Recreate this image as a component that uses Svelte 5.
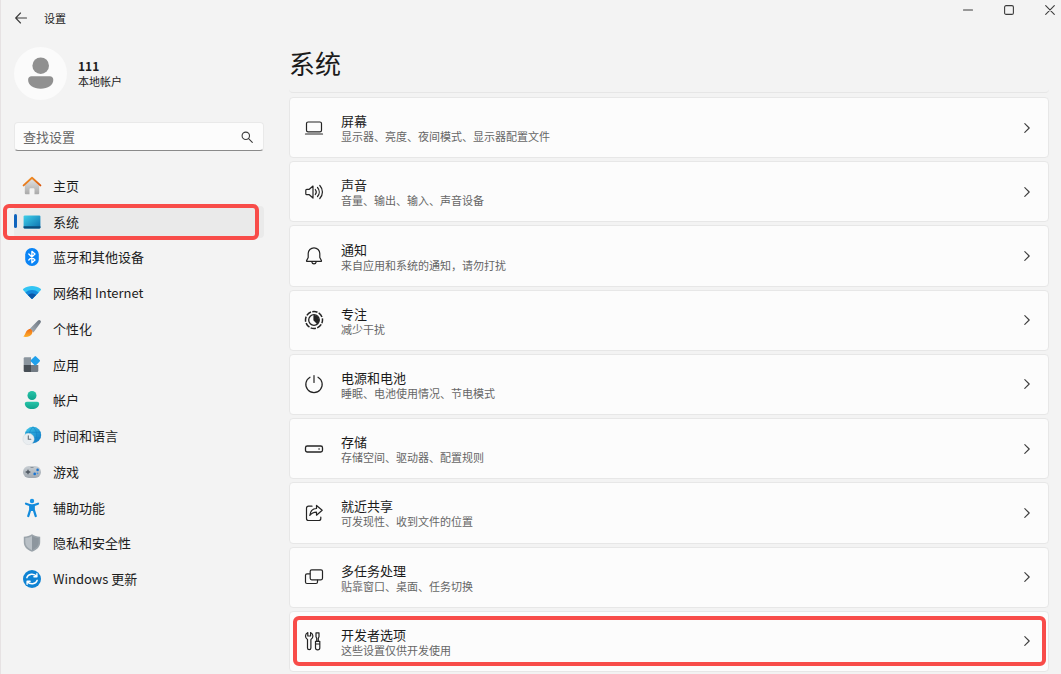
<script>
  const line = (body) =>
    `<svg width="20" height="20" viewBox="0 0 20 20" fill="none" stroke="#242424" stroke-width="1.2" stroke-linecap="round" stroke-linejoin="round" aria-hidden="true">${body}</svg>`;
  const color = (body) =>
    `<svg width="20" height="20" viewBox="0 0 20 20" fill="none" aria-hidden="true">${body}</svg>`;

  const nav = [
    {
      label: '主页',
      icon: color(`<defs><linearGradient id="hw" x1="0" y1="0" x2="0" y2="1"><stop stop-color="#e4e4e4"/><stop offset="1" stop-color="#a9a9a9"/></linearGradient><linearGradient id="hr" x1="0" y1="0" x2="1" y2="1"><stop stop-color="#f59a2c"/><stop offset="1" stop-color="#d9560b"/></linearGradient></defs>
        <path d="M2.8 9 10 2.4 17.2 9v8.3a1 1 0 0 1-1 1h-3.7v-5.1a1 1 0 0 0-1-1h-3a1 1 0 0 0-1 1v5.1H3.8a1 1 0 0 1-1-1z" fill="url(#hw)"/>
        <path d="M1.6 9.4 10 1.8l8.4 7.6" stroke="url(#hr)" stroke-width="1.9" stroke-linecap="round" stroke-linejoin="round"/>`)
    },
    {
      label: '系统',
      active: true,
      icon: color(`<defs><linearGradient id="sy" x1="0" y1="0" x2="1" y2="1"><stop stop-color="#3fd0ea"/><stop offset="1" stop-color="#0c6fae"/></linearGradient></defs>
        <rect x="1.6" y="3.4" width="16.8" height="13" rx="1.2" fill="url(#sy)"/><path d="M1.6 14.2h16.8v1a1.2 1.2 0 0 1-1.2 1.2H2.8a1.2 1.2 0 0 1-1.2-1.2z" fill="#0b4c7c"/>`)
    },
    {
      label: '蓝牙和其他设备',
      icon: color(`<rect x="3.2" y="1" width="13.6" height="18" rx="6.6" fill="#0a84f5"/><path d="m6.8 7 6.2 6-3.1 2.7V4.3L13 7l-6.2 6" stroke="#fff" stroke-width="1.3" stroke-linejoin="round" stroke-linecap="round"/>`)
    },
    {
      label: '网络和 Internet',
      icon: color(`<path d="M1.3 7.3a1 1 0 0 1 .1-1.5c5-3.8 12.2-3.8 17.2 0a1 1 0 0 1 .1 1.5L10.7 15.6a1 1 0 0 1-1.4 0z" fill="#32c4f3"/>
        <path d="M3.3 9.4c3.9-3.3 9.5-3.3 13.4 0l-6 6.2a1 1 0 0 1-1.4 0z" fill="#1489db"/><path d="M5.900 12.100c2.500-2 5.700-2 8.200 0l-3.400 3.500a1 1 0 0 1-1.400 0z" fill="#0b57a8"/>`)
    },
    {
      label: '个性化',
      icon: color(`<defs><linearGradient id="bh" x1="1" y1="0" x2="0" y2="1"><stop stop-color="#6b7580"/><stop offset="1" stop-color="#a7afb7"/></linearGradient><linearGradient id="bt" x1="0" y1="0" x2="0" y2="1"><stop stop-color="#ef6a14"/><stop offset="1" stop-color="#fdb02b"/></linearGradient></defs>
        <path d="M7.600 10 16 1.600a1.600 1.600 0 0 1 2.400 2.400L11.400 13.400z" fill="url(#bh)"/>
        <path d="M6.800 10.200c1.900-.8 4.300 1.600 3.500 3.800-1 3.100-5.500 4.700-9.100 3.600 2.400-1.500 2.100-6 5.600-7.400z" fill="url(#bt)"/>`)
    },
    {
      label: '应用',
      icon: color(`<path d="M2.900 2.300H9V10H1.700V3.500a1.200 1.200 0 0 1 1.200-1.200z" fill="#8b959e"/><path d="M1.700 10H9v7H2.900a1.200 1.200 0 0 1-1.200-1.200z" fill="#474e55"/><path d="M9 10h7.300v5.800a1.200 1.200 0 0 1-1.200 1.200H9z" fill="#727b84"/><rect x="9.700" y="2.200" width="7.200" height="7.200" rx="1" transform="rotate(45 13.300 5.800)" fill="#1ea0ec"/>`)
    },
    {
      label: '帐户',
      icon: color(`<defs><linearGradient id="ac" x1="0" y1="0" x2="0" y2="1"><stop stop-color="#27c4a8"/><stop offset="1" stop-color="#10a38d"/></linearGradient></defs>
        <circle cx="10" cy="5.500" r="4.500" fill="url(#ac)"/><path d="M4.800 11.800h10.400c1.100 0 2 .8 2 1.900 0 3-3.100 5.300-7.200 5.300s-7.200-2.300-7.200-5.300c0-1.100.9-1.900 2-1.900z" fill="url(#ac)"/>`)
    },
    {
      label: '时间和语言',
      icon: color(`<defs><linearGradient id="gl" x1="0" y1="0" x2="1" y2="1"><stop stop-color="#43cbe9"/><stop offset="1" stop-color="#0c73c4"/></linearGradient></defs>
        <circle cx="11" cy="9" r="8.200" fill="url(#gl)"/><path d="M3.500 6.300h15M3.500 11.800h15M11 .8c-5 5-5 11 0 16.400M11 .8c5 5 5 11 0 16.400" stroke="#1685c6" stroke-width=".9" opacity=".75"/>
        <circle cx="6.500" cy="13" r="5.700" fill="#e9edf0" stroke="#ccd3d8" stroke-width=".4"/><path d="M6.300 9.800v3.500h2.500" stroke="#65707a" stroke-width="1.100" stroke-linecap="round"/>`)
    },
    {
      label: '游戏',
      icon: color(`<defs><linearGradient id="gm" x1="0" y1="0" x2="0" y2="1"><stop stop-color="#c8ced3"/><stop offset="1" stop-color="#a0a8b0"/></linearGradient></defs>
        <rect x="1" y="4" width="18" height="12" rx="5.800" fill="url(#gm)"/><path d="M3.700 10h4.600M6 7.700v4.600" stroke="#4a535c" stroke-width="1.300"/><circle cx="15.600" cy="7.900" r="1.300" fill="#1974d2"/><circle cx="12.700" cy="11.900" r="1.300" fill="#1974d2"/><circle cx="15.500" cy="11.400" r=".8" fill="#4d96df"/><path d="M8.500 5.500h3" stroke="#7b858e" stroke-width=".8"/>`)
    },
    {
      label: '辅助功能',
      icon: color(`<g stroke="#138bdc" stroke-linecap="round" stroke-linejoin="round"><path d="m4 5.700 4.300 1.600h3.400L16 5.700" stroke-width="2.200"/><path d="M8.300 7.500v4L6.300 18M11.700 7.500v4l2 6.500" stroke-width="2.300"/></g><path d="M7.800 7h4.400v6H7.800z" fill="#138bdc"/><circle cx="10" cy="3" r="2.200" fill="#1794e6"/>`)
    },
    {
      label: '隐私和安全性',
      icon: color(`<path d="M10 1.200c2.300 1.700 4.900 2.400 8.200 2.500v5.500c0 4.300-3 7.500-8.200 9.600-5.200-2.100-8.200-5.300-8.200-9.600V3.700c3.300-.1 5.900-.8 8.200-2.500z" fill="#9aa3aa"/><path d="M10 2.900v14.300c-4.300-1.900-6.700-4.600-6.700-8.100V5C6 4.800 8.100 4.200 10 2.900z" fill="#b9c0c6"/><path d="M10 2.900c1.900 1.300 4 1.900 6.700 2.100v4.100c0 3.500-2.400 6.200-6.700 8.100z" fill="#8d969e"/>`)
    },
    {
      label: 'Windows 更新',
      icon: color(`<circle cx="10" cy="10" r="9" fill="#0f83d3"/><g stroke="#fff" stroke-width="1.400" stroke-linecap="round" stroke-linejoin="round"><path d="M4.800 8.700c1.200-4 7.200-4.800 9.900-1.200M14.900 4.700v3h-3M15.200 11.300c-1.200 4-7.200 4.800-9.900 1.200M5.100 15.300v-3h3"/></g>`)
    }
  ];

  const cards = [
    {
      title: '屏幕',
      text: '显示器、亮度、夜间模式、显示器配置文件',
      icon: line(`<rect x="2.500" y="4" width="15" height="9.800" rx="1.600"/><path d="M1.500 16h17"/>`)
    },
    {
      title: '声音',
      text: '音量、输出、输入、声音设备',
      icon: line(`<path d="M9 4 5.300 7.300H2.800a1 1 0 0 0-1 1v3.400a1 1 0 0 0 1 1h2.500L9 16z"/><path d="M11.300 7.500c1.200 1.500 1.200 3.500 0 5M13.500 5.500c2.300 2.600 2.300 6.400 0 9M15.800 3.500c3.500 3.800 3.500 9.200 0 13"/>`)
    },
    {
      title: '通知',
      text: '来自应用和系统的通知，请勿打扰',
      icon: line(`<path d="M10 1.800c-3.300 0-5.800 2.600-5.800 5.800v3.900l-1.600 3.100c-.2.400 0 .8.500.8h13.800c.5 0 .7-.4.500-.8l-1.600-3.100V7.600c0-3.200-2.500-5.800-5.800-5.800z"/><path d="M7.700 15.600c.2 1.300 1.100 2.200 2.300 2.200s2.100-.9 2.300-2.200"/>`)
    },
    {
      title: '专注',
      text: '减少干扰',
      icon: line(`<circle cx="10" cy="10" r="8.500" stroke-width="1.500" stroke-linecap="butt" stroke-dasharray="5.300 1.376" stroke-dashoffset="2"/><circle cx="10" cy="10" r="5.300" stroke-width="1.300"/><path d="M10 5.500v4.700l3.200 3.200A4.700 4.700 0 0 0 10 5.500z" fill="#242424"/>`)
    },
    {
      title: '电源和电池',
      text: '睡眠、电池使用情况、节电模式',
      icon: line(`<path d="M10 1.500v7M6 3.200a8.200 8.200 0 1 0 8 0"/>`)
    },
    {
      title: '存储',
      text: '存储空间、驱动器、配置规则',
      icon: line(`<rect x="1.500" y="7" width="17" height="6" rx="1.800" stroke-width="1.300"/><path d="M15 10h.1" stroke-width="1.500"/>`)
    },
    {
      title: '就近共享',
      text: '可发现性、收到文件的位置',
      icon: line(`<path d="M8 3.200H4.500a2 2 0 0 0-2 2v10.300a2 2 0 0 0 2 2h10.300a2 2 0 0 0 2-2V14"/><path d="M12.500 2.500v3C8.800 5.700 6.300 8 5.800 12.500c1.700-2.300 3.800-3.300 6.700-3.300v3l5.700-4.900z"/>`)
    },
    {
      title: '多任务处理',
      text: '贴靠窗口、桌面、任务切换',
      icon: line(`<rect x="6.200" y="2.800" width="12.300" height="10" rx="1.500"/><path d="M6 6.800H3a1.500 1.500 0 0 0-1.500 1.500V15A1.500 1.500 0 0 0 3 16.500h9a1.500 1.500 0 0 0 1.500-1.500v-2"/>`)
    },
    {
      title: '开发者选项',
      text: '这些设置仅供开发使用',
      marked: true,
      icon: line(`<path d="M3.800 1.500C2.300 2.200 1.500 3.500 1.500 5c0 1.600.8 2.800 2 3.500v8.400a1.700 1.700 0 0 0 3.400 0V8.500c1.200-.7 2-1.900 2-3.500 0-1.500-.8-2.800-2.300-3.500V5H3.800z"/><path d="M12 1.800h3v4l-.7 1.500v3h-1.600v-3L12 5.800zM11.500 10.300h4.300v6.500a2.100 2.100 0 0 1-4.300 0zM11.500 13h4.300"/>`)
    }
  ];
</script>

<div class="window">
  <header class="titlebar">
    <button class="back" aria-label="返回">
      <svg width="12" height="12" viewBox="0 0 12 12"><path d="M11.500 6H.8M5.500 1 .7 6l4.800 5" /></svg>
    </button>
    <span class="app-name">设置</span>
    <div class="controls">
      <button aria-label="最小化"><svg width="10" height="10" viewBox="0 0 10 10"><path d="M.5 5h9" /></svg></button>
      <button aria-label="最大化"><svg width="10" height="10" viewBox="0 0 10 10"><rect x=".6" y=".6" width="8.800" height="8.800" rx="1.500" /></svg></button>
      <button aria-label="关闭"><svg width="10" height="10" viewBox="0 0 10 10"><path d="m.7.7 8.600 8.600M9.300.7.7 9.300" /></svg></button>
    </div>
  </header>

  <div class="body">
    <aside>
      <div class="account">
        <span class="avatar">
          <svg width="53" height="53" viewBox="0 0 53 53" aria-hidden="true">
            <circle cx="26.500" cy="26.500" r="26.500" fill="#fbfbfb" />
            <circle cx="26.700" cy="18.700" r="8.300" fill="#909090" />
            <path d="M17.500 29.300h18.400c2 0 3.400 1.400 3.400 3.400 0 5.500-5.300 9-12.600 9s-12.600-3.500-12.600-9c0-2 1.400-3.400 3.400-3.400z" fill="#909090" />
          </svg>
        </span>
        <div>
          <div class="user">111</div>
          <div class="kind">本地帐户</div>
        </div>
      </div>

      <label class="search">
        <input type="text" placeholder="查找设置" aria-label="查找设置" />
        <svg width="12" height="12" viewBox="0 0 12 12" aria-hidden="true"><circle cx="4.800" cy="4.800" r="3.700" /><path d="m7.600 7.600 3.700 3.700" /></svg>
      </label>

      <nav>
        {#each nav as item}
          <a href="#top" class:active={item.active} aria-current={item.active ? 'page' : undefined}>
            <span class="icon">{@html item.icon}</span>
            {item.label}
          </a>
        {/each}
      </nav>
    </aside>

    <main>
      <h1>系统</h1>
      <div class="previous"></div>
      <div class="cards">
        {#each cards as card}
          <button class="card" class:marked={card.marked}>
            <span class="icon">{@html card.icon}</span>
            <span class="copy">
              <span class="name">{card.title}</span>
              <span class="text">{card.text}</span>
            </span>
            <svg class="chevron" width="6" height="10" viewBox="0 0 6 10" aria-hidden="true"><path d="m.8.6 4.400 4.400L.8 9.400" /></svg>
          </button>
        {/each}
      </div>
    </main>
  </div>
</div>

<style>
  :global(body) {
    margin: 0;
    background: #f3f3f3;
  }

  .window {
    box-sizing: border-box;
    display: flex;
    flex-direction: column;
    min-height: 100vh;
    border-left: 1px solid #e6e2e3;
    background: #f3f3f3;
    color: #1b1b1b;
    font-family: 'Noto Sans CJK SC', 'Noto Sans', sans-serif;
    font-size: 13px;
    line-height: 16px;
  }

  button,
  input {
    margin: 0;
    padding: 0;
    border: 0;
    background: none;
    color: inherit;
    font: inherit;
  }

  svg {
    display: block;
  }

  .icon {
    display: grid;
    flex: none;
  }

  .titlebar {
    display: flex;
    align-items: center;
    height: 35px;
    padding-left: 14px;
  }

  .titlebar svg,
  .search svg,
  .chevron {
    fill: none;
    stroke: #3c3c3c;
    stroke-width: 1.1;
    stroke-linecap: round;
    stroke-linejoin: round;
  }

  .back {
    margin-right: 17px;
  }

  .app-name {
    font-size: 11px;
  }

  .controls {
    display: flex;
    align-self: flex-start;
    margin-left: auto;
  }

  .controls button {
    display: grid;
    place-items: center;
    width: 41px;
    height: 20px;
  }

  .controls button:last-child {
    width: 22px;
    margin-left: 10px;
  }

  .body {
    flex: 1;
    display: flex;
    gap: 25px;
    padding: 0 12px 0 13px;
  }

  aside {
    flex: none;
    display: flex;
    flex-direction: column;
    width: 250px;
    padding-top: 12px;
  }

  .account {
    display: flex;
    align-items: center;
    gap: 11px;
  }

  .user {
    font-size: 12px;
    font-weight: 600;
    line-height: 16px;
  }

  .kind {
    font-size: 11px;
    line-height: 15px;
  }

  .search {
    box-sizing: border-box;
    display: flex;
    align-items: center;
    height: 29px;
    margin-top: 22px;
    padding: 0 10px 0 8px;
    border: 1px solid #e9e9e9;
    border-bottom-color: #8a8a8a;
    border-radius: 4px;
    background: #fcfcfc;
  }

  .search input {
    flex: 1;
    min-width: 0;
    outline: none;
  }

  .search input::placeholder {
    color: #666;
    opacity: 1;
  }

  nav {
    flex: 1;
    display: flex;
    flex-direction: column;
    gap: 4px;
    padding: 19px 0 79px;
  }

  nav a {
    position: relative;
    flex: 1;
    display: flex;
    align-items: center;
    gap: 11px;
    padding-left: 8px;
    border-radius: 4px;
    color: inherit;
    text-decoration: none;
  }

  .active {
    background: #eaeaea;
  }

  .active::before {
    content: '';
    position: absolute;
    top: 50%;
    left: 0;
    width: 3px;
    height: 14px;
    margin-top: -8px;
    border-radius: 2px;
    background: #0f64bd;
  }

  .active::after,
  .marked::after {
    content: '';
    position: absolute;
    border: 4px solid #f84c49;
    border-radius: 6px;
    pointer-events: none;
  }

  .active::after {
    inset: -2px 5px -2px -11px;
  }

  main {
    flex: 1;
    min-width: 0;
    display: flex;
    flex-direction: column;
  }

  h1 {
    margin: 10px 0 0;
    font-size: 26px;
    font-weight: 400;
    line-height: 36px;
  }

  .previous {
    height: 6px;
    margin-top: 5px;
    border-bottom: 1px solid #e6e6e6;
    border-radius: 0 0 4px 4px;
  }

  .cards {
    flex: 1;
    display: flex;
    flex-direction: column;
    gap: 3px;
    padding: 4px 0 2px;
  }

  .card {
    position: relative;
    flex: 1;
    display: flex;
    align-items: center;
    padding: 0 18px 0 14px;
    border: 1px solid #e7e7e7;
    border-radius: 4px;
    background: #fcfcfc;
    text-align: left;
  }

  .copy {
    flex: 1;
    padding: 2px 0 0 17px;
  }

  .name,
  .text {
    display: block;
  }

  .text {
    color: #666;
    font-size: 11px;
    line-height: 15px;
  }

  .marked::after {
    inset: 4px 2px 5px 3px;
  }
</style>
